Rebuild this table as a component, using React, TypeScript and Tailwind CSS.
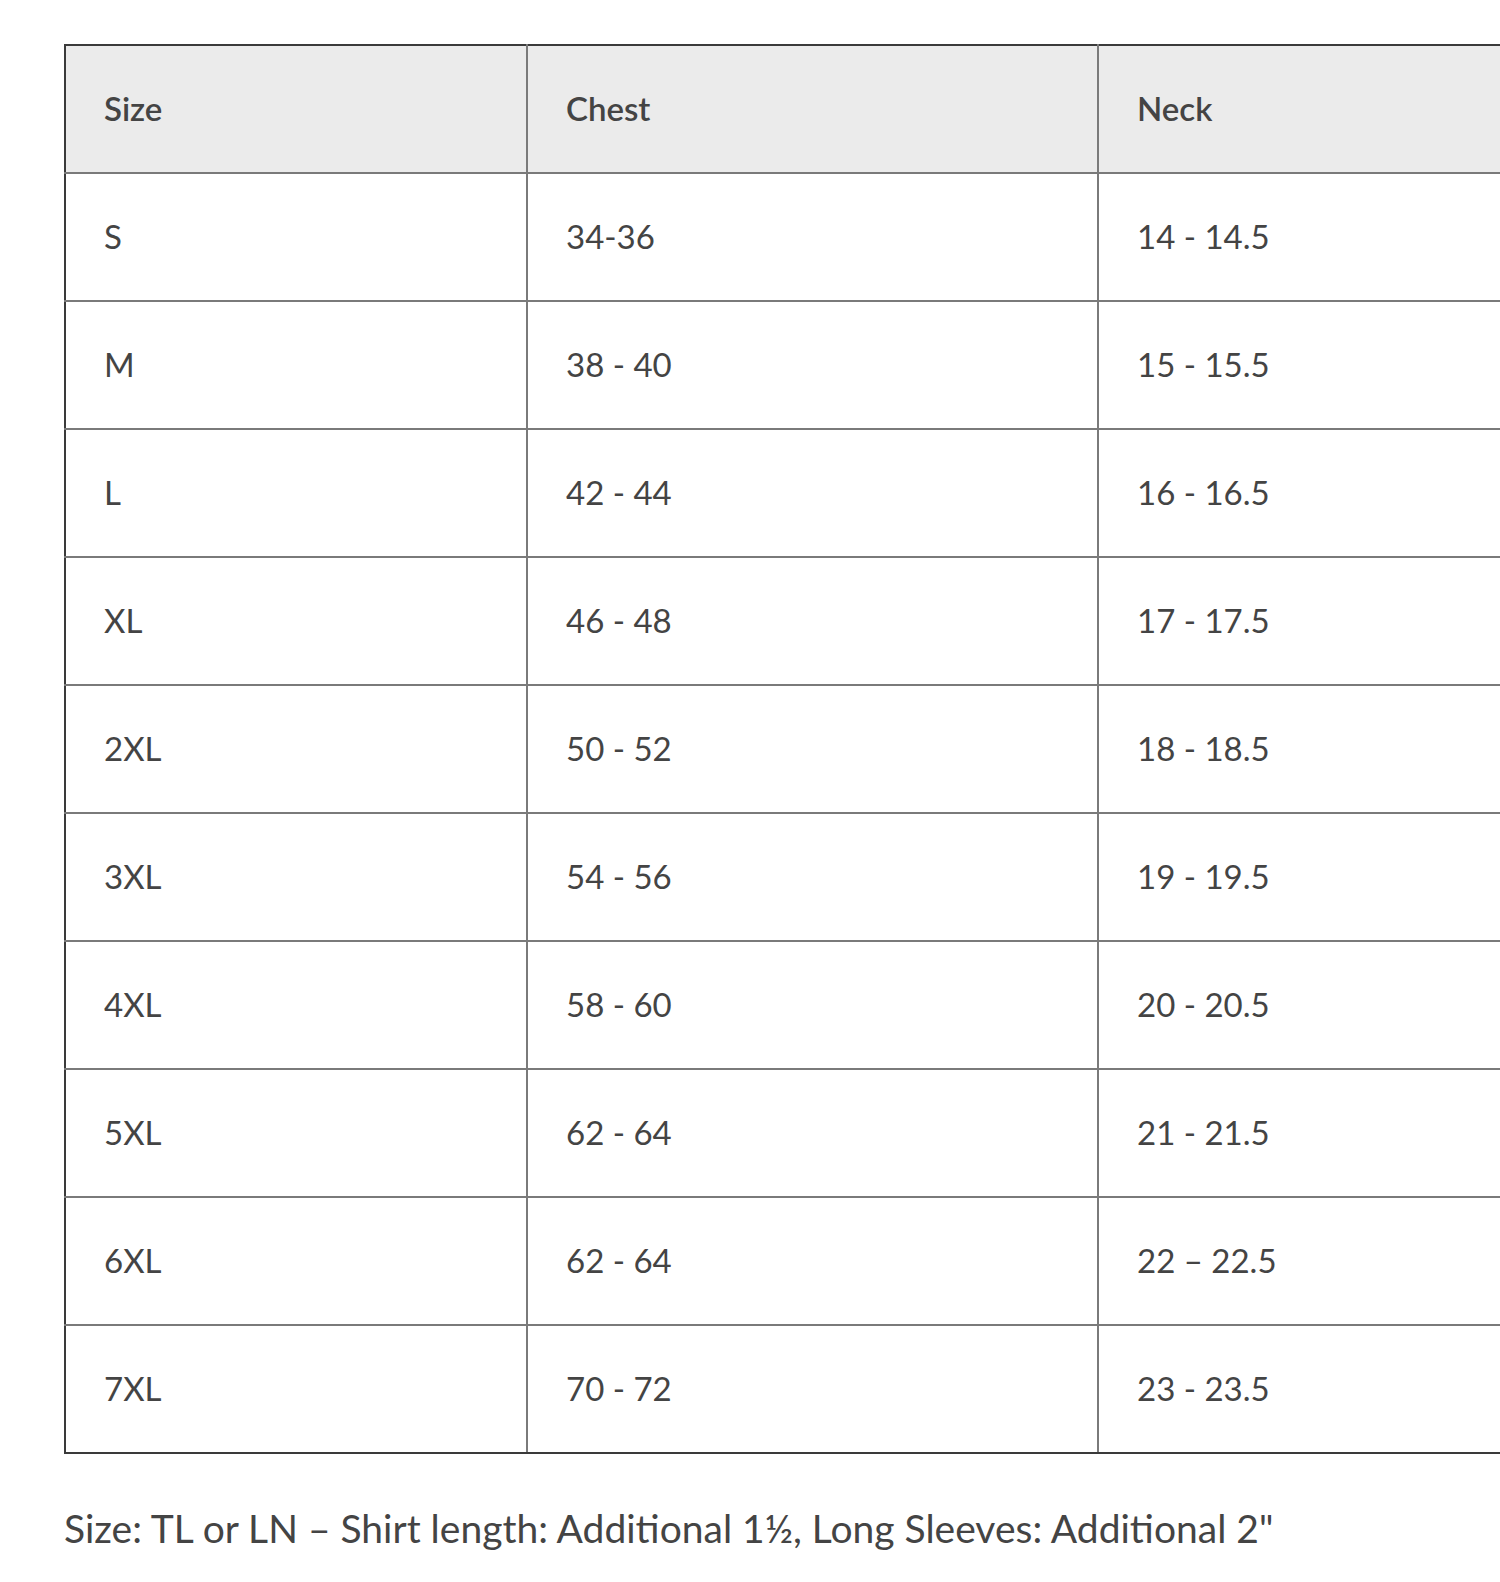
import React from 'react'

// Tabelle mit Größen
const rows: [string, string, string][] = [
  ['S', '34-36', '14 - 14.5'],
  ['M', '38 - 40', '15 - 15.5'],
  ['L', '42 - 44', '16 - 16.5'],
  ['XL', '46 - 48', '17 - 17.5'],
  ['2XL', '50 - 52', '18 - 18.5'],
  ['3XL', '54 - 56', '19 - 19.5'],
  ['4XL', '58 - 60', '20 - 20.5'],
  ['5XL', '62 - 64', '21 - 21.5'],
  ['6XL', '62 - 64', '22 – 22.5'],
  ['7XL', '70 - 72', '23 - 23.5'],
]

const cell = 'h-[128px] border-2 border-[#7a7a7a] pl-[38px] text-left align-middle'

export default function App() {
  return (
    <div
      className="w-[1500px] h-[1582px] overflow-hidden bg-white pt-[44px] pl-[64px] text-[#444]"
      style={{ fontFamily: 'Lato, "Noto Sans", sans-serif' }}
    >
      <table className="w-[1520px] table-fixed border-collapse border-2 border-[#3a3a3a] text-[33px]">
        <colgroup>
          <col className="w-[462px]" />
          <col className="w-[571px]" />
          <col />
        </colgroup>
        <thead>
          <tr className="bg-[#ebebeb]">
            <th className={`${cell} border-t-[#3a3a3a] border-l-[#3a3a3a] font-semibold`}>Size</th>
            <th className={`${cell} border-t-[#3a3a3a] font-semibold`}>Chest</th>
            <th className={`${cell} border-t-[#3a3a3a] font-semibold`}>Neck</th>
          </tr>
        </thead>
        <tbody>
          {rows.map((r, i) => (
            <tr key={r[0]}>
              <td className={`${cell} border-l-[#3a3a3a] ${i === rows.length - 1 ? 'border-b-[#3a3a3a]' : ''}`}>{r[0]}</td>
              <td className={`${cell} ${i === rows.length - 1 ? 'border-b-[#3a3a3a]' : ''}`}>{r[1]}</td>
              <td className={`${cell} ${i === rows.length - 1 ? 'border-b-[#3a3a3a]' : ''}`}>{r[2]}</td>
            </tr>
          ))}
        </tbody>
      </table>
      <p className="mt-[45px] text-[39px] text-[#444]">
        Size: TL or LN – Shirt length: Additional 1½, Long Sleeves: Additional 2"
      </p>
    </div>
  )
}
